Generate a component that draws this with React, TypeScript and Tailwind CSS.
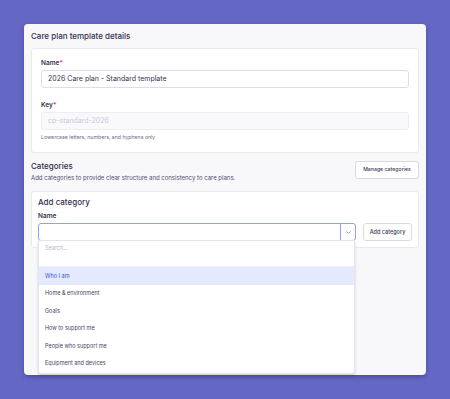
import React from 'react';
import { ChevronDown } from 'lucide-react';

const categories = [
  'Who I am',
  'Home & environment',
  'Goals',
  'How to support me',
  'People who support me',
  'Equipment and devices',
];

const Label: React.FC<{ text: string; required?: boolean }> = ({ text, required }) => (
  <div className="text-[6.5px] font-semibold leading-[8px] text-[#33334f]">
    {text}
    {required && <span className="text-[#e0404f]">*</span>}
  </div>
);

const App: React.FC = () => {
  return (
    <div
      className="w-[450px] h-[399px] bg-[#6567c5] pt-[24px] pl-[24px]"
      style={{ fontFamily: 'Inter, "Noto Sans", sans-serif' }}
    >
      <div className="w-[402px] h-[351px] bg-[#f8f8fb] rounded-[4px] shadow-[0_2px_4px_rgba(30,30,80,0.35)] px-[7px] pt-[7px]">
        <h1 className="text-[8px] leading-[10px] font-medium text-[#2f2f4d]">Care plan template details</h1>

        <div className="mt-[7px] bg-white border border-[#e9e9f0] rounded-[3px] px-[9px] pt-[10px] pb-[12px]">
          <Label text="Name" required />
          <div className="mt-[3px] h-[18px] border border-[#dddde8] rounded-[3px] flex items-center px-[6px] text-[7px] text-[#33334f]">
            2026 Care plan - Standard template
          </div>
          <div className="mt-[13px]">
            <Label text="Key" required />
          </div>
          <div className="mt-[3px] h-[18px] border border-[#ededf2] bg-[#f9f9fb] rounded-[3px] flex items-center px-[6px] text-[7px] text-[#c9c9d5]">
            cp-standard-2026
          </div>
          <div className="mt-[4px] text-[5.2px] leading-[6px] text-[#6b6b85]">Lowercase letters, numbers, and hyphens only</div>
        </div>

        <div className="mt-[8px] flex items-start justify-between">
          <div>
            <h2 className="text-[8px] leading-[10px] font-medium text-[#2f2f4d]">Categories</h2>
            <p className="mt-[3px] text-[6px] leading-[7px] text-[#4f4f6b]">
              Add categories to provide clear structure and consistency to care plans.
            </p>
          </div>
          <button className="h-[18px] w-[64px] bg-white border border-[#d9d9e4] rounded-[3px] text-[5.2px] font-medium text-[#3a3a58]">
            Manage categories
          </button>
        </div>

        <div className="mt-[10px] bg-white border border-[#e9e9f0] rounded-[3px] px-[6px] pt-[5px] pb-[6px]">
          <h3 className="text-[8px] leading-[10px] font-medium text-[#2f2f4d]">Add category</h3>
          <div className="mt-[5px]">
            <Label text="Name" />
          </div>
          <div className="mt-[3px] flex items-center gap-[7px]">
            <div className="relative w-[318px]">
              <div className="h-[18px] border border-[#8fa1f0] rounded-[3px] flex">
                <div className="flex-1" />
                <div className="w-[15px] border-l border-[#8fa1f0] flex items-center justify-center">
                  <ChevronDown className="w-[7px] h-[7px] text-[#55557a]" strokeWidth={2} />
                </div>
              </div>
              <div className="absolute left-0 top-[17px] w-[317px] bg-white border border-[#e4e4ec] rounded-b-[3px] shadow-[0_2px_3px_rgba(40,40,90,0.18)] z-10">
                <div className="h-[26px] px-[6px] pt-[3px] text-[5.5px] text-[#b5b5c5] border-b border-[#eeeef3]">Search...</div>
                <div className="pb-[1px]">
                  {categories.map((c, i) => (
                    <div
                      key={c}
                      className={
                        i === 0
                          ? 'h-[17.5px] flex items-center px-[6px] text-[5.5px] bg-[#e5e9fd] text-[#3650e0]'
                          : 'h-[17.5px] flex items-center px-[6px] text-[5.5px] text-[#45455f]'
                      }
                    >
                      {c}
                    </div>
                  ))}
                </div>
              </div>
            </div>
            <button className="h-[18px] w-[49px] bg-white border border-[#d9d9e4] rounded-[3px] text-[5.5px] font-medium text-[#3a3a58]">
              Add category
            </button>
          </div>
        </div>
      </div>
    </div>
  );
};

export default App;
